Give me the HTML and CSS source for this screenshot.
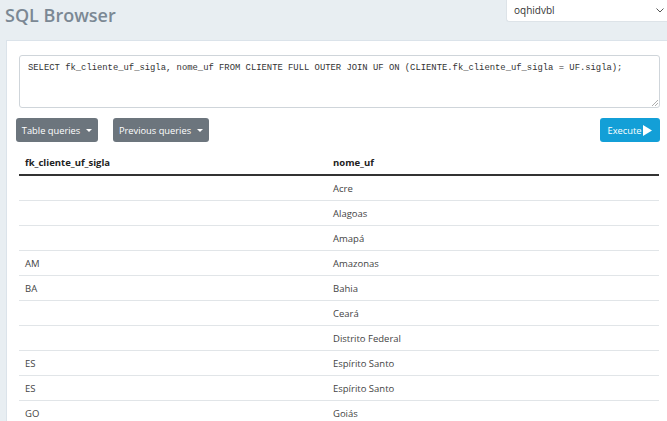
FILE: index.html
```html
<!DOCTYPE html>
<html>
<head>
<meta charset="utf-8">
<link rel="stylesheet" href="styles.css">
</head>
<body>
<div class="header">
  <h1 class="title">SQL Browser</h1>
  <div class="db-select">
    <span>oqhidvbl</span>
    <svg class="chev" width="8" height="5" viewBox="0 0 8 5"><path d="M0.5 0.5 L4 4 L7.5 0.5" fill="none" stroke="#555" stroke-width="1"/></svg>
  </div>
</div>
<div class="panel">
  <div class="editor">
    <div class="sql">SELECT fk_cliente_uf_sigla, nome_uf FROM CLIENTE FULL OUTER JOIN UF ON (CLIENTE.fk_cliente_uf_sigla = UF.sigla);</div>
    <svg class="grip" width="6" height="6" viewBox="0 0 6 6"><path d="M6 0 L0 6 M6 3 L3 6" stroke="#999" stroke-width="0.8"/></svg>
  </div>
  <div class="toolbar">
    <button class="btn btn-gray">Table queries <span class="caret"></span></button>
    <button class="btn btn-gray">Previous queries <span class="caret"></span></button>
    <span class="spacer"></span>
    <button class="btn btn-blue">Execute <svg width="9" height="11" viewBox="0 0 9 11"><path d="M0 0 L9 5.5 L0 11 Z" fill="#fff"/></svg></button>
  </div>
  <table class="results">
    <thead><tr><th>fk_cliente_uf_sigla</th><th>nome_uf</th></tr></thead>
    <tbody>
      <tr><td></td><td>Acre</td></tr>
      <tr><td></td><td>Alagoas</td></tr>
      <tr><td></td><td>Amapá</td></tr>
      <tr><td>AM</td><td>Amazonas</td></tr>
      <tr><td>BA</td><td>Bahia</td></tr>
      <tr><td></td><td>Ceará</td></tr>
      <tr><td></td><td>Distrito Federal</td></tr>
      <tr><td>ES</td><td>Espírito Santo</td></tr>
      <tr><td>ES</td><td>Espírito Santo</td></tr>
      <tr><td>GO</td><td>Goiás</td></tr>
    </tbody>
  </table>
</div>
</body>
</html>
```
FILE: styles.css
```css
html, body {
  margin: 0;
  padding: 0;
  background: #e8eef2;
  font-family: "Open Sans", "Noto Sans", sans-serif;
  overflow: hidden;
  height: 421px;
}
.header {
  height: 40px;
  display: flex;
  align-items: flex-start;
  justify-content: space-between;
}
.title {
  margin: 3px 0 0 5px;
  font-size: 18px;
  font-weight: 600;
  color: #7b8894;
}
.db-select {
  width: 161px;
  height: 22px;
  background: #fff;
  border: 1px solid #dde3e8;
  border-top: none;
  border-right: none;
  border-radius: 0 0 0 3px;
  box-sizing: border-box;
  display: flex;
  align-items: center;
  justify-content: space-between;
  padding: 0 3px 1px 7px;
  font-size: 10px;
  color: #333;
}
.chev { margin-top: 1px; }
.panel {
  margin-left: 6px;
  background: #fff;
  border-top: 1px solid #dbe3ea;
  border-left: 1px solid #dbe3ea;
  padding: 14px 7px 0 12px;
  height: 400px;
  box-sizing: border-box;
}
.editor {
  position: relative;
  height: 53px;
  border: 1px solid #cfd5da;
  border-radius: 3px;
  box-sizing: border-box;
  padding: 6px 8px;
  width: 641px;
}
.sql {
  font-family: "Liberation Mono", monospace;
  font-size: 8.85px;
  color: #333;
  white-space: nowrap;
  line-height: 12px;
}
.grip {
  position: absolute;
  right: 1px;
  bottom: 1px;
}
.toolbar {
  display: flex;
  align-items: center;
  margin: 10px 0 0 -3px;
  width: 644px;
}
.btn {
  height: 24px;
  border: none;
  border-radius: 3px;
  font-family: "Open Sans", "Noto Sans", sans-serif;
  font-size: 9.3px;
  color: #fff;
  padding: 0 8px;
  display: inline-flex;
  align-items: center;
  justify-content: center;
  white-space: nowrap;
  margin: 0;
}
.btn-gray {
  background: #6c757d;
  margin-right: 15px;
}
.btn-gray:nth-child(1) { width: 82px; }
.btn-gray:nth-child(2) { width: 96px; }
.caret {
  display: inline-block;
  margin-left: 6px;
  border-left: 3px solid transparent;
  border-right: 3px solid transparent;
  border-top: 3.5px solid #fff;
}
.spacer { flex: 1; }
.btn-blue {
  background: #139fd7;
  width: 60px;
  padding: 0 5px;
  gap: 2px;
}
.results {
  border-collapse: collapse;
  width: 640px;
  margin-top: 10px;
  font-size: 9.5px;
  color: #444;
}
.results th {
  text-align: left;
  font-weight: 700;
  color: #222;
  height: 20px;
  padding: 0 0 2px 6px;
  border-bottom: 2px solid #333;
}
.results th:first-child, .results td:first-child { width: 302px; }
.results td {
  height: 24px;
  padding: 0 0 0 6px;
  border-bottom: 1px solid #e1e5e8;
}
```
